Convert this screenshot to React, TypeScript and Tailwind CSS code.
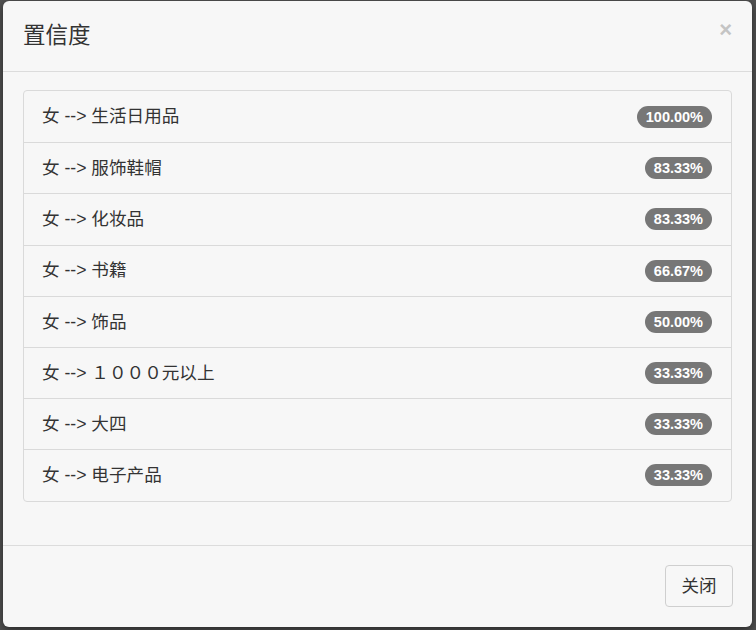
const rows = [
  { label: '女 --> 生活日用品', value: '100.00%' },
  { label: '女 --> 服饰鞋帽', value: '83.33%' },
  { label: '女 --> 化妆品', value: '83.33%' },
  { label: '女 --> 书籍', value: '66.67%' },
  { label: '女 --> 饰品', value: '50.00%' },
  { label: '女 --> １０００元以上', value: '33.33%' },
  { label: '女 --> 大四', value: '33.33%' },
  { label: '女 --> 电子产品', value: '33.33%' },
]

export default function App() {
  return (
    <div
      className="w-[756px] h-[630px] bg-[#515151] pl-[3px] pt-[1px] text-[#333]"
      style={{ fontFamily: '"Liberation Sans", "Noto Sans CJK SC", sans-serif' }}
    >
      <div className="w-[749px] h-[626px] bg-[#f7f7f7] rounded-[6px] flex flex-col shadow-[0_3px_9px_rgba(0,0,0,0.5)]">
        {/* header */}
        <div className="h-[71px] border-b border-[#dcdcdc] flex items-center justify-between pl-[20px] pr-[20px]">
          <h4 className="text-[22.5px] leading-[29px] text-[#333] pb-[1px]">置信度</h4>
          <button className="text-[#c4c4c4] text-[22px] font-bold leading-none -mt-[12px]">×</button>
        </div>

        {/* body */}
        <div className="px-[20px] pt-[18px] h-[473px]">
          <ul className="border border-[#dadada] rounded-[4px]">
            {rows.map((row, i) => (
              <li
                key={i}
                className={
                  'h-[51.2px] flex items-center justify-between pl-[18px] pr-[19px] text-[17.6px] ' +
                  (i > 0 ? 'border-t border-[#dadada]' : '')
                }
              >
                <span>{row.label}</span>
                <span className="bg-[#777] text-white font-bold text-[14.5px] leading-[22px] px-[9px] rounded-full">
                  {row.value}
                </span>
              </li>
            ))}
          </ul>
        </div>

        {/* footer */}
        <div className="border-t border-[#dcdcdc] flex-1 flex justify-end items-start pt-[19px] pr-[19px]">
          <button className="w-[68px] h-[42px] border border-[#cfcfcf] rounded-[4px] bg-[#f7f7f7] text-[17.5px] text-[#333]">
            关闭
          </button>
        </div>
      </div>
    </div>
  )
}
